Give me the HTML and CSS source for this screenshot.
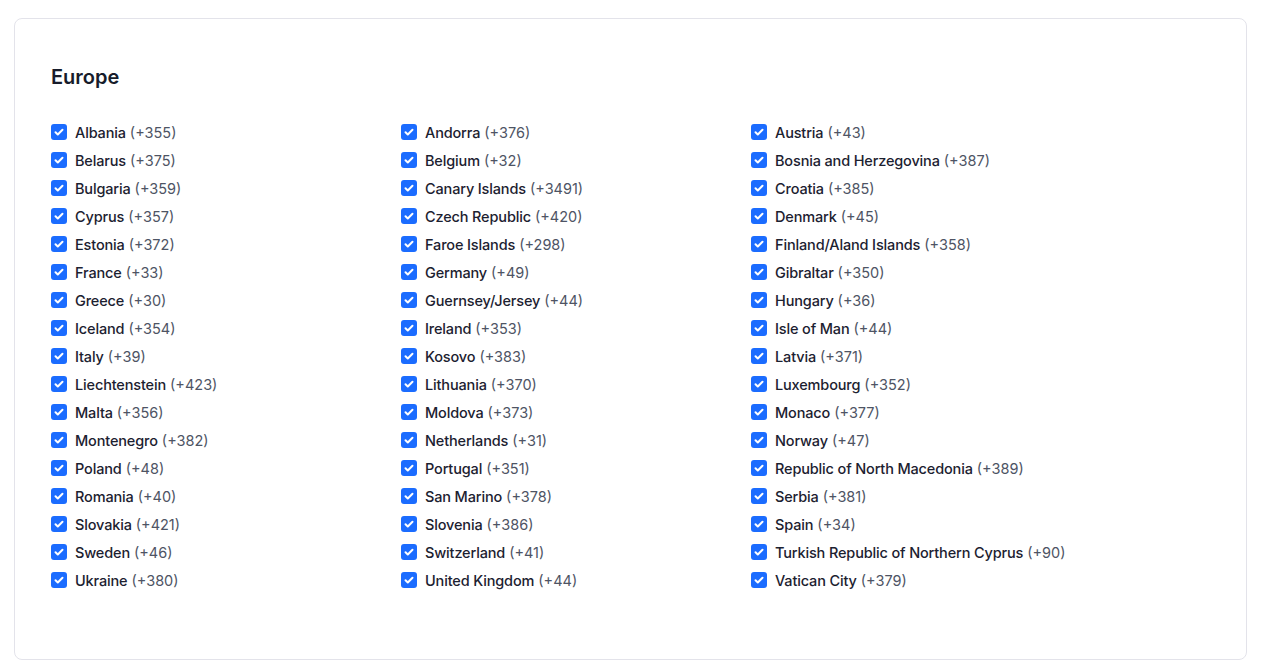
FILE: index.html
```html
<!DOCTYPE html>
<html lang="en">
<head>
  <meta charset="UTF-8" />
  <meta name="viewport" content="width=device-width, initial-scale=1.0"/>
  <title>Country codes</title>
  <link rel="stylesheet" href="styles.css">
</head>
<body>
  <div class="card">
    <h2 class="region">Europe</h2>
    <div class="countries" id="countries"></div>
  </div>

  <script>
    const countries = [
      ['Albania', 355], ['Andorra', 376], ['Austria', 43],
      ['Belarus', 375], ['Belgium', 32], ['Bosnia and Herzegovina', 387],
      ['Bulgaria', 359], ['Canary Islands', 3491], ['Croatia', 385],
      ['Cyprus', 357], ['Czech Republic', 420], ['Denmark', 45],
      ['Estonia', 372], ['Faroe Islands', 298], ['Finland/Aland Islands', 358],
      ['France', 33], ['Germany', 49], ['Gibraltar', 350],
      ['Greece', 30], ['Guernsey/Jersey', 44], ['Hungary', 36],
      ['Iceland', 354], ['Ireland', 353], ['Isle of Man', 44],
      ['Italy', 39], ['Kosovo', 383], ['Latvia', 371],
      ['Liechtenstein', 423], ['Lithuania', 370], ['Luxembourg', 352],
      ['Malta', 356], ['Moldova', 373], ['Monaco', 377],
      ['Montenegro', 382], ['Netherlands', 31], ['Norway', 47],
      ['Poland', 48], ['Portugal', 351], ['Republic of North Macedonia', 389],
      ['Romania', 40], ['San Marino', 378], ['Serbia', 381],
      ['Slovakia', 421], ['Slovenia', 386], ['Spain', 34],
      ['Sweden', 46], ['Switzerland', 41], ['Turkish Republic of Northern Cyprus', 90],
      ['Ukraine', 380], ['United Kingdom', 44], ['Vatican City', 379]
    ];

    const list = document.getElementById('countries');
    const tick = '<svg viewBox="0 0 16 16" width="16" height="16"><path d="M4.5 8.2l2.3 2.3 4.7-4.8" fill="none" stroke="#fff" stroke-width="2" stroke-linecap="round" stroke-linejoin="round"/></svg>';

    countries.forEach(function (c) {
      const row = document.createElement('label');
      row.className = 'country';
      row.innerHTML = '<span class="check">' + tick + '</span>' +
        '<span class="name">' + c[0] + '</span>' +
        '<span class="code">(+' + c[1] + ')</span>';
      list.appendChild(row);
    });
  </script>
</body>
</html>
```

FILE: styles.css
```css
body {
  margin: 18px 19px 12px 14px;
  background: #fff;
  font-family: Inter, 'Noto Sans', sans-serif;
  color: #1c2130;
}
.card {
  border: 1px solid #e3e3ea;
  border-radius: 8px;
  padding: 44px 36px 65px;
}
.region {
  margin: 0 0 27px;
  font-size: 20px;
  line-height: 28px;
  font-weight: 600;
  color: #171c2b;
}
.countries {
  display: grid;
  grid-template-columns: repeat(3, 350px);
  grid-auto-rows: 28px;
}
.country {
  display: flex;
  align-items: center;
  font-size: 14.5px;
  white-space: nowrap;
}
.check {
  width: 16px;
  height: 16px;
  border-radius: 3px;
  background: #1b6cff;
  display: flex;
  margin-right: 8px;
}
.name {
  font-weight: 500;
  letter-spacing: -0.15px;
  color: #1c2130;
  margin-right: 4px;
}
.code {
  color: #4e5464;
}
```
